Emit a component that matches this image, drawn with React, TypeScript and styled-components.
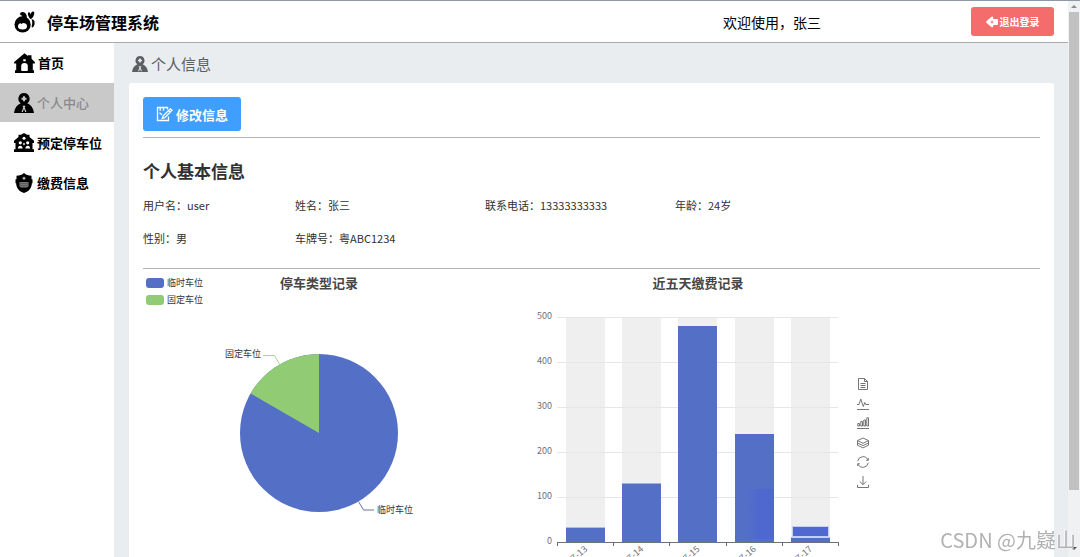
import React from 'react';
import styled, { createGlobalStyle } from 'styled-components';

const GlobalStyle = createGlobalStyle`
  * { box-sizing: border-box; }
  body {
    margin: 0;
    overflow: hidden;
    background: #e9edf0;
    font-family: "Noto Sans CJK SC", sans-serif;
    color: #303133;
  }
  button { font: inherit; border: 0; margin: 0; cursor: pointer; }
  h1, h2, h3, p, dl, dd, ul { margin: 0; padding: 0; }
`;

const Shell = styled.div`
  display: grid;
  grid-template-columns: minmax(0, 1fr) 12px;
  height: 100vh;
  border-top: 1px solid #8f99a6;
  overflow: hidden;
`;

const Page = styled.div`
  display: flex;
  flex-direction: column;
  min-width: 0;
  min-height: 0;
`;

const Header = styled.header`
  display: flex;
  align-items: center;
  flex: none;
  height: 42px;
  padding: 0 14px;
  background: #fff;
  border-bottom: 1px solid #a6a9ad;
  color: #000;
`;

const Brand = styled.h1`
  display: flex;
  align-items: center;
  gap: 11px;
  flex: 1;
  font-size: 16px;
  line-height: 24px;
  font-weight: 700;
`;

const Welcome = styled.p`
  font-size: 14px;
  line-height: 20px;
  margin-right: 150px;
`;

const LogoutButton = styled.button`
  display: flex;
  align-items: center;
  justify-content: center;
  gap: 2px;
  width: 83px;
  height: 29px;
  padding: 0;
  border-radius: 3px;
  background: #f56c6c;
  color: #fff;
  font-size: 10px;
  font-weight: 700;
`;

const Body = styled.div`
  display: flex;
  flex: 1;
  min-height: 0;
`;

const Sidebar = styled.nav`
  display: flex;
  flex-direction: column;
  gap: 1px;
  flex: none;
  width: 114px;
  background: #fff;
`;

const NavLink = styled.a<{ $active?: boolean }>`
  display: flex;
  align-items: center;
  gap: 3px;
  height: 39px;
  padding-left: 14px;
  background: ${(p) => (p.$active ? '#c9c9c9' : 'transparent')};
  color: ${(p) => (p.$active ? '#8a8a8a' : '#000')};
  font-size: 13px;
  font-weight: ${(p) => (p.$active ? 500 : 700)};
  text-decoration: none;
  white-space: nowrap;
  svg { color: #000; flex: none; }
`;

const Main = styled.main`
  flex: 1;
  min-width: 0;
  padding: 0 14px 0 15px;
`;

const Crumb = styled.h2`
  display: flex;
  align-items: center;
  gap: 3px;
  height: 40px;
  padding: 2px 0 0 3px;
  color: #5c5f64;
  font-size: 15px;
  line-height: 24px;
  font-weight: 400;
`;

const Card = styled.section`
  height: 600px;
  padding: 14px;
  background: #fff;
  border-radius: 3px 3px 0 0;
`;

const EditButton = styled.button`
  display: flex;
  align-items: center;
  justify-content: center;
  gap: 3px;
  width: 98px;
  height: 34px;
  padding: 0;
  border-radius: 3px;
  background: #409eff;
  color: #fff;
  font-size: 13px;
  font-weight: 700;
`;

const Profile = styled.div`
  margin-top: 6px;
  padding: 20px 0 22px;
  border-top: 1px solid #b4b4b4;
  border-bottom: 1px solid #b4b4b4;
`;

const ProfileTitle = styled.h3`
  font-size: 17px;
  line-height: 26px;
  font-weight: 700;
`;

const Fields = styled.dl`
  display: grid;
  grid-template-columns: 152fr 190fr 190fr 365fr;
  row-gap: 17px;
  margin-top: 13px;
  font-size: 11px;
  line-height: 16px;
`;

const Field = styled.div`
  display: flex;
  white-space: nowrap;
`;

const Charts = styled.div`
  display: flex;
  gap: 27px;
`;

const ChartPanel = styled.section`
  flex: none;
  width: 352px;
`;

const ChartHead = styled.div`
  display: grid;
  grid-template-columns: 1fr auto 1fr;
  height: 39px;
  padding-top: 5px;
`;

const ChartTitle = styled.h3`
  grid-column: 2;
  font-size: 13px;
  line-height: 17px;
  font-weight: 700;
  color: #464646;
`;

const Legend = styled.ul`
  list-style: none;
  padding-left: 3px;
`;

const LegendItem = styled.li<{ $color: string }>`
  display: flex;
  align-items: center;
  gap: 3px;
  height: 17px;
  font-size: 9px;
  color: #333;
  &::before {
    content: "";
    width: 18px;
    height: 10px;
    border-radius: 3px;
    background: ${(p) => p.$color};
  }
`;

const ChartRow = styled.div`
  display: flex;
  gap: 7px;
`;

const Drawing = styled.svg`
  display: block;
  flex: none;
  font-size: 9px;
`;

const Tools = styled.div`
  display: flex;
  flex-direction: column;
  justify-content: space-between;
  height: 110px;
  margin-top: 70px;
`;

const ToolButton = styled.button`
  width: 12px;
  height: 12px;
  padding: 0;
  background: none;
  color: #666;
  svg { display: block; }
`;

const Track = styled.div`
  display: flex;
  flex-direction: column;
  align-items: center;
  background: #f0f1f2;
`;

const ArrowUp = styled.span`
  width: 0;
  margin: 4px 0;
  border: 3px solid transparent;
  border-top: 0;
  border-bottom-color: #8a8a8a;
`;

const Thumb = styled.div`
  width: 10px;
  height: 86%;
  background: #c1c1c1;
`;

const ArrowDown = styled.span`
  width: 0;
  margin: auto 0 7px;
  border: 3px solid transparent;
  border-bottom: 0;
  border-top-color: #505050;
`;

const Watermark = styled.div`
  position: fixed;
  right: 4px;
  bottom: 4px;
  font-size: 20px;
  line-height: 26px;
  font-weight: 400;
  color: #b2b2b2;
  text-shadow: -1px -1px 0 rgba(255, 255, 255, 0.7);
  white-space: nowrap;
  pointer-events: none;
`;

const RabbitLogo = () => (
  <svg width="22" height="22" viewBox="0 0 22 22" fill="currentColor" aria-hidden="true">
    <circle cx="8.600" cy="13.400" r="8.100" />
    <path d="M6.500 1.800C8.500 0 11.500 1.200 12.500 4c.5 1.500.3 3-.3 4L7.500 6.500C8.600 5.500 8.500 4.800 7.600 4.600 6.200 4.400 5.600 2.800 6.500 1.800z" />
    <path d="M14.300 1.500c1.200-.9 2.100.5 2.300 2.300.2-1.600 1.200-3.500 2.700-3.300 1.500.3 1.200 3-.1 5.200-.7 1.200-1.700 2-2.700 2.200-1.600-1-3.400-5-2.200-6.400z" />
    <path d="M17.500 8.200c2.500-.3 3.600 2 3 5-.3 1.600-1.300 3.200-2.300 3.400-.8-.2-.6-1.400-.2-2.900.4-1.900.4-3.600-.5-5.500z" />
    <ellipse cx="8.500" cy="15.200" rx="4.500" ry="3.300" fill="#fff" />
    <circle cx="7.600" cy="12.300" r=".8" />
  </svg>
);

const HomeIcon = () => (
  <svg width="21" height="20" viewBox="0 0 21 20" fill="currentColor" aria-hidden="true">
    <path fillRule="evenodd" d="M10.500.3 14 3V2.200h3.500v3.600L20.800 9c.4.800 0 1.600-.8 1.600h-1.200v6.600H20V20H1v-2.800h1.200v-6.600H1C.2 10.600-.2 9.800.2 9zM7.200 13.300V17c0 .6.400 1 1 1h4.600c.6 0 1-.4 1-1v-3.700a3.300 3.300 0 0 0-6.600 0zM9.300 6.200v2h2.400v-2z" />
  </svg>
);

const UserIcon = ({ size }: { size: number }) => (
  <svg width={size} height={size} viewBox="0 0 20 20" fill="currentColor" aria-hidden="true">
    <path fillRule="evenodd" d="M10 0a5.700 5.700 0 0 1 3.300 10.300C17 11.800 19.300 15 20 20H0c.7-5 3-8.200 6.700-9.700A5.700 5.700 0 0 1 10 0zM9 3.200v1.500H7.500v2H9v1.500h2V6.700h1.500v-2H11V3.200zM8.300 12.800l1 1.500L7.600 19h1.200l1.200-3.200 1.200 3.200h1.200l-1.700-4.700 1-1.500z" />
  </svg>
);

const ParkingIcon = () => (
  <svg width="20" height="19" viewBox="0 0 20 19" aria-hidden="true">
    <path fill="currentColor" d="M10 0l3 1.800h2.500V4L20 7.800V10h-1.500v6.300H20V19H0v-2.700h1.500V10H0V7.800L4.500 4V1.800H7z" />
    <g fill="#fff">
      <circle cx="10" cy="5.300" r="1.500" />
      <circle cx="6.300" cy="9.800" r="1.600" />
      <circle cx="13.700" cy="9.800" r="1.600" />
      <path d="M3.800 15.500c.2-2 1.200-2.800 2.500-2.800s2.200.8 2.400 2.800zM11.300 15.500c.2-2 1.200-2.800 2.500-2.800s2.200.8 2.400 2.800zM10 9.500l1 1.500-1 1.500L9 11z" />
    </g>
  </svg>
);

const ShieldIcon = () => (
  <svg width="20" height="20" viewBox="0 0 20 20" aria-hidden="true">
    <path fill="currentColor" d="M10 0c2 1.800 4.500 2.600 7.500 2.800v3.400h1v4h-.6c-.3 4.800-2.700 8-7.900 9.800-5.200-1.800-7.600-5-7.900-9.800h-.6v-4h1V2.800C5.500 2.600 8 1.800 10 0z" />
    <path fill="#777" d="M5.500 9h9v4.500l-1.500 1H7l-1.500-1z" />
    <path d="M5.500 10.500h9M5.500 12.500h9" stroke="#555" strokeWidth=".7" />
    <path d="M10 3.800v3M8.500 5.300h3" stroke="#ddd" />
  </svg>
);

const BackIcon = () => (
  <svg width="12" height="12" viewBox="0 0 12 12" aria-hidden="true">
    <path fill="#fff" d="M6 .5c.8 0 1.200.6 1.200 1.300V3H11c.6 0 1 .4 1 1v4c0 .6-.4 1-1 1H7.200v1.200c0 1-1 1.500-1.800.9L.6 6.900C0 6.400 0 5.600.6 5.100L5.200.9z" />
    <path d="M4.500 6h3M6 4.500v3" stroke="#f56c6c" strokeWidth=".9" />
  </svg>
);

const EditIcon = () => (
  <svg width="17" height="16" viewBox="0 0 17 16" fill="none" stroke="#fff" strokeWidth="1.300" aria-hidden="true">
    <path d="M12.500 10.500v4H1.500v-13h10v2M4.200 1.500v3.300M7.500 1.500v3.300M3.500 6.800l2.500 2" />
    <path d="M14.300 2.800l1.700 1.500-7 7.200-2.700 1 .9-2.700zM12.600 4.600l1.600 1.500" />
  </svg>
);

const toolIcons = [
  { label: '数据视图', path: 'M1.500.5h6l3 3v8h-9zM7.500.5v3h3M3.500 5.500h5M3.500 7.500h5M3.500 9.500h5' },
  { label: '切换为折线图', path: 'M0 6.500h2L3.800 1l2.500 7.500L7.800 4.500l1 2H12M0 11.500h12' },
  { label: '切换为柱状图', path: 'M.8 9V6.500h1.700V9zM3.800 9V4.500h1.700V9zM6.800 9V3h1.700v6zM9.800 9V.8h1.700V9zM0 11.500h12' },
  { label: '切换为堆叠', path: 'M6 1l5.500 2.600L6 6.300.5 3.600zM.5 6L6 8.600 11.500 6M.5 8.200L6 10.900l5.500-2.700M.5 3.600v4.600M11.500 3.600v4.600' },
  { label: '还原', path: 'M.7 5.200A5.400 5.400 0 0 1 11 4M11.300 6.800A5.400 5.400 0 0 1 1 8M11.300 2V4.300H9.200M.7 10V7.700h2.100' },
  { label: '保存为图片', path: 'M6 0v8.500M2.800 5.500L6 8.700l3.200-3.200M.5 8.800v2.700h11V8.800' },
];

const menu = [
  { label: '首页', icon: <HomeIcon /> },
  { label: '个人中心', icon: <UserIcon size={20} />, active: true },
  { label: '预定停车位', icon: <ParkingIcon /> },
  { label: '缴费信息', icon: <ShieldIcon /> },
];

const fields = [
  ['用户名', 'user'],
  ['姓名', '张三'],
  ['联系电话', '13333333333'],
  ['年龄', '24岁'],
  ['性别', '男'],
  ['车牌号', '粤ABC1234'],
];

const payments = [
  { day: '07-13', value: 32 },
  { day: '07-14', value: 130 },
  { day: '07-15', value: 480 },
  { day: '07-16', value: 240 },
  { day: '07-17', value: 10 },
];

const BASE = 234;
const SCALE = 0.45;
const STEP = 56.2;
const AXIS_X = 35;

const PieChart = () => (
  <Drawing width="352" height="260" role="img" aria-label="停车类型记录">
    <circle cx="176" cy="125" r="79" fill="#5470c6" />
    <path d="M176 125L107.600 85.500A79 79 0 0 1 176 46z" fill="#91cc75" />
    <path d="M136.500 56l-5-8.500H120" fill="none" stroke="#a9d794" />
    <path d="M215.500 193.500l5 8.500H231" fill="none" stroke="#66759f" />
    <text x="118" y="49" textAnchor="end" fill="#333">固定车位</text>
    <text x="234" y="205" fill="#333">临时车位</text>
  </Drawing>
);

const BarChart = () => (
  <Drawing width="328" height="280" role="img" aria-label="近五天缴费记录">
    <defs>
      <linearGradient id="patch" x1="0" x2="1">
        <stop offset="0" stopColor="#4f68d0" stopOpacity="0" />
        <stop offset=".5" stopColor="#4f68d0" />
      </linearGradient>
    </defs>
    {payments.map((p, i) => (
      <rect key={p.day} x={Math.round(AXIS_X + i * STEP + 9)} y={BASE - 225} width="39" height="225" fill="#efefef" />
    ))}
    {[0, 100, 200, 300, 400, 500].map((v) => (
      <g key={v}>
        {v > 0 && <path d={`M${AXIS_X} ${BASE - v * SCALE + 0.5}h281`} stroke="#e4e6ea" />}
        <text x="30" y={BASE - v * SCALE + 2} textAnchor="end" fill="#6e7079">{v}</text>
      </g>
    ))}
    {payments.map((p, i) => (
      <rect key={p.day} x={Math.round(AXIS_X + i * STEP + 9)} y={BASE - p.value * SCALE} width="39" height={p.value * SCALE} fill="#5470c6" />
    ))}
    <rect x="223" y="181" width="29" height="50" fill="url(#patch)" />
    <rect x="270" y="218" width="37" height="12" fill="#c6cff3" />
    <rect x="271" y="219" width="35" height="9" fill="#5069d0" />
    <path d={`M${AXIS_X} ${BASE + 0.5}h281`} stroke="#6e7079" />
    {[0, 1, 2, 3, 4, 5].map((i) => (
      <path key={i} d={`M${Math.round(AXIS_X + i * STEP) + 0.5} ${BASE}v4`} stroke="#6e7079" />
    ))}
    {payments.map((p, i) => (
      <text key={p.day} textAnchor="end" fill="#6e7079" transform={`translate(${AXIS_X + i * STEP + 31} ${BASE + 8}) rotate(-40)`}>
        {p.day}
      </text>
    ))}
  </Drawing>
);

export default function App() {
  return (
    <>
      <GlobalStyle />
      <Shell>
        <Page>
          <Header>
            <Brand><RabbitLogo />停车场管理系统</Brand>
            <Welcome>欢迎使用，张三</Welcome>
            <LogoutButton type="button"><BackIcon />退出登录</LogoutButton>
          </Header>
          <Body>
            <Sidebar>
              {menu.map((m) => (
                <NavLink key={m.label} href="#" $active={m.active}>{m.icon}{m.label}</NavLink>
              ))}
            </Sidebar>
            <Main>
              <Crumb><UserIcon size={16} />个人信息</Crumb>
              <Card>
                <EditButton type="button"><EditIcon />修改信息</EditButton>
                <Profile>
                  <ProfileTitle>个人基本信息</ProfileTitle>
                  <Fields>
                    {fields.map(([name, value]) => (
                      <Field key={name}><dt>{name}：</dt><dd>{value}</dd></Field>
                    ))}
                  </Fields>
                </Profile>
                <Charts>
                  <ChartPanel>
                    <ChartHead>
                      <Legend>
                        <LegendItem $color="#5470c6">临时车位</LegendItem>
                        <LegendItem $color="#91cc75">固定车位</LegendItem>
                      </Legend>
                      <ChartTitle>停车类型记录</ChartTitle>
                    </ChartHead>
                    <PieChart />
                  </ChartPanel>
                  <ChartPanel>
                    <ChartHead><ChartTitle>近五天缴费记录</ChartTitle></ChartHead>
                    <ChartRow>
                      <BarChart />
                      <Tools>
                        {toolIcons.map((t) => (
                          <ToolButton key={t.label} type="button" aria-label={t.label}>
                            <svg width="12" height="12" viewBox="0 0 12 12" fill="none" stroke="currentColor" strokeWidth=".9">
                              <path d={t.path} />
                            </svg>
                          </ToolButton>
                        ))}
                      </Tools>
                    </ChartRow>
                  </ChartPanel>
                </Charts>
              </Card>
            </Main>
          </Body>
        </Page>
        <Track aria-hidden="true"><ArrowUp /><Thumb /><ArrowDown /></Track>
      </Shell>
      <Watermark>CSDN @九嶷山</Watermark>
    </>
  );
}
